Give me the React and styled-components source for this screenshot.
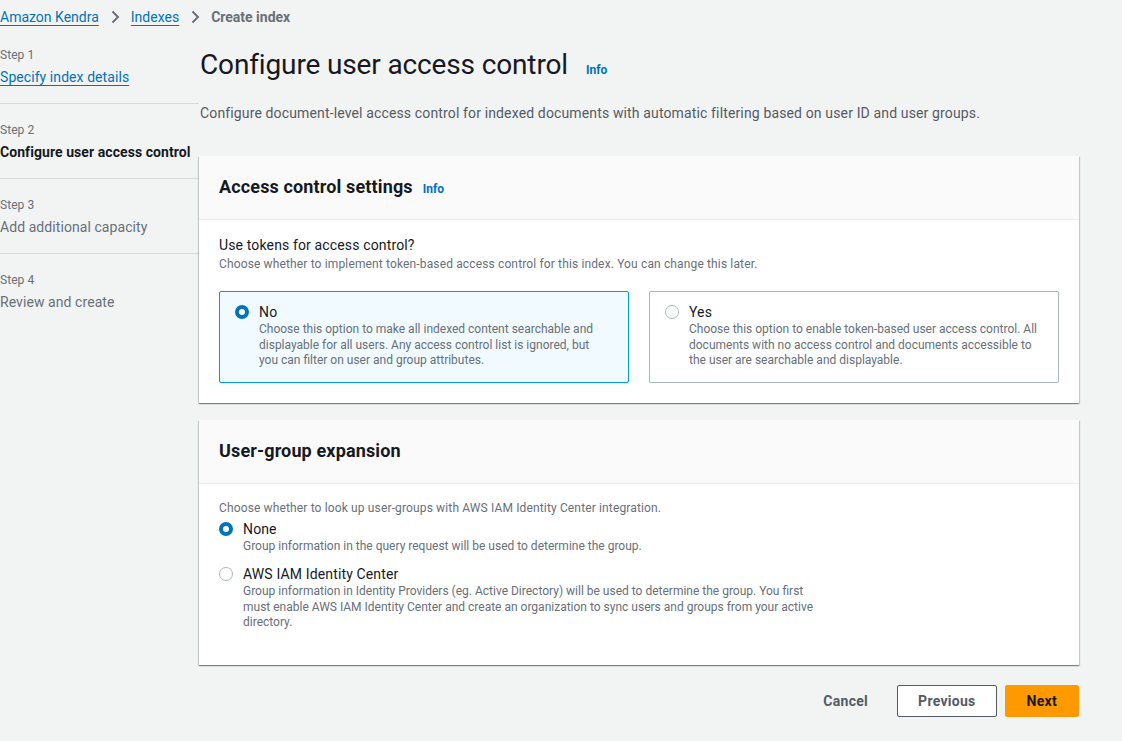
import styled, { createGlobalStyle } from "styled-components";

const GlobalStyle = createGlobalStyle`
  html, body {
    margin: 0;
    padding: 0;
    background: #f2f3f3;
  }
  body {
    font-family: Roboto, "Open Sans", Arial, sans-serif;
    color: #16191f;
    font-size: 14px;
    letter-spacing: 0.01em;
  }
  * { box-sizing: border-box; }
`;

const Page = styled.div`
  width: 1122px;
  min-height: 741px;
  padding-top: 7px;
`;

const Breadcrumbs = styled.nav`
  display: flex;
  align-items: center;
  gap: 11px;
  line-height: 20px;
  height: 20px;
  margin-bottom: 19px;
  letter-spacing: 0;
`;

const Crumb = styled.a`
  color: ${(p) => (p.$current ? "#687078" : "#0073bb")};
  font-weight: ${(p) => (p.$current ? 700 : 400)};
  text-decoration: ${(p) => (p.$current ? "none" : "underline")};
  text-underline-offset: 3px;
`;

const Chevron = () => (
  <svg width="10" height="14" viewBox="0 0 10 14">
    <path d="M2.5 1.5 L8 7 L2.5 12.5" fill="none" stroke="#687078" strokeWidth="2" />
  </svg>
);

const Layout = styled.div`
  display: grid;
  grid-template-columns: 199px 880px;
`;

const StepNav = styled.ul`
  list-style: none;
  margin: 1px 0 0;
  padding: 0;
  letter-spacing: 0.005em;
`;

const StepItem = styled.li`
  padding: ${(p) => (p.$first ? "0" : "18.5px")} 0 15px 0;
  border-bottom: ${(p) => (p.$last ? "none" : "1px solid #d5dbdb")};
`;

const StepLabel = styled.div`
  font-size: 12px;
  line-height: 16px;
  color: #687078;
  margin-bottom: 2.5px;
`;

const StepTitle = styled.div`
  font-size: 14px;
  line-height: 22px;
  white-space: nowrap;
  color: ${(p) => (p.$state === "active" ? "#16191f" : p.$state === "link" ? "#0073bb" : "#687078")};
  font-weight: ${(p) => (p.$state === "active" ? 700 : 400)};
  text-decoration: ${(p) => (p.$state === "link" ? "underline" : "none")};
  text-underline-offset: 3px;
`;

const Main = styled.main`
  display: flex;
  flex-direction: column;
`;

const TitleRow = styled.div`
  display: flex;
  align-items: baseline;
  gap: 18px;
  padding-left: 1px;
  padding-top: 1px;
`;

const PageTitle = styled.h1`
  margin: 0;
  font-size: 28px;
  line-height: 36px;
  font-weight: 400;
  letter-spacing: -0.005em;
`;

const Info = styled.a`
  font-size: 12px;
  font-weight: 700;
  letter-spacing: 0;
  color: #0073bb;
  text-decoration: none;
`;

const PageDesc = styled.p`
  margin: 19px 0 32px 1px;
  font-size: 14px;
  line-height: 22px;
  color: #545b64;
`;

const Container = styled.section`
  background: #fff;
  box-shadow: 0 1px 1px 0 rgba(0, 28, 36, 0.3), 1px 1px 1px 0 rgba(0, 28, 36, 0.15),
    -1px 1px 1px 0 rgba(0, 28, 36, 0.15);
  margin-bottom: ${(p) => p.$gap || 0}px;
`;

const ContainerHeader = styled.header`
  display: flex;
  align-items: baseline;
  gap: 10px;
  padding: 20px 20px 21px;
  background: #fafafa;
  border-bottom: 1px solid #eaeded;
`;

const ContainerTitle = styled.h2`
  margin: 0;
  font-size: 18px;
  line-height: 22px;
  font-weight: 700;
`;

const ContainerBody = styled.div`
  padding: ${(p) => p.$pad || "14px 20px 20px"};
`;

const FieldLabel = styled.div`
  font-size: 14px;
  line-height: 22px;
`;

const FieldDesc = styled.div`
  font-size: 12px;
  line-height: 16px;
  color: #687078;
`;

const Tiles = styled.div`
  display: grid;
  grid-template-columns: 1fr 1fr;
  gap: 20px;
  margin-top: 19px;
`;

const Tile = styled.div`
  display: flex;
  gap: 10px;
  padding: 10px 15px 13px;
  border: 1px solid ${(p) => (p.$checked ? "#00a1c9" : "#aab7b8")};
  border-radius: 2px;
  background: ${(p) => (p.$checked ? "#f1faff" : "#fff")};
`;

const Radio = styled.span`
  flex: none;
  width: 14px;
  height: 14px;
  margin-top: 3px;
  border-radius: 50%;
  background: #fff;
  border: ${(p) => (p.$checked ? "4px solid #0073bb" : "1px solid #aab7b8")};
`;

const OptionText = styled.div`
  display: flex;
  flex-direction: column;
  max-width: ${(p) => (p.$wrap ? `${p.$wrap}px` : "none")};
`;

const OptionLabel = styled.div`
  font-size: 14px;
  line-height: 20px;
`;

const OptionDesc = styled.div`
  font-size: 12px;
  line-height: 15.5px;
  letter-spacing: 0;
  color: #687078;
`;

const RadioGroup = styled.div`
  display: flex;
  flex-direction: column;
  gap: 9.5px;
  margin-top: 3.5px;
`;

const RadioRow = styled.div`
  display: flex;
  gap: 10px;
`;

const Actions = styled.div`
  display: flex;
  justify-content: flex-end;
  gap: 8px;
  margin-top: 20px;
`;

const Button = styled.button`
  font-family: inherit;
  font-size: 14px;
  font-weight: 700;
  letter-spacing: 0.02em;
  line-height: 22px;
  padding: 4px ${(p) => (p.$variant === "primary" ? 21 : 20)}px;
  border-radius: 2px;
  cursor: pointer;
  border: 1px solid
    ${(p) => (p.$variant === "primary" ? "#ff9900" : p.$variant === "link" ? "transparent" : "#545b64")};
  background: ${(p) => (p.$variant === "primary" ? "#ff9900" : p.$variant === "link" ? "transparent" : "#fff")};
  color: ${(p) => (p.$variant === "primary" ? "#16191f" : "#545b64")};
`;

const steps = [
  { label: "Step 1", title: "Specify index details", state: "link" },
  { label: "Step 2", title: "Configure user access control", state: "active" },
  { label: "Step 3", title: "Add additional capacity", state: "" },
  { label: "Step 4", title: "Review and create", state: "" },
];

export default function App() {
  return (
    <Page>
      <GlobalStyle />
      <Breadcrumbs>
        <Crumb href="#">Amazon Kendra</Crumb>
        <Chevron />
        <Crumb href="#">Indexes</Crumb>
        <Chevron />
        <Crumb $current>Create index</Crumb>
      </Breadcrumbs>

      <Layout>
        <StepNav>
          {steps.map((s, i) => (
            <StepItem key={s.label} $first={i === 0} $last={i === steps.length - 1}>
              <StepLabel>{s.label}</StepLabel>
              <StepTitle $state={s.state}>{s.title}</StepTitle>
            </StepItem>
          ))}
        </StepNav>

        <Main>
          <TitleRow>
            <PageTitle>Configure user access control</PageTitle>
            <Info href="#">Info</Info>
          </TitleRow>
          <PageDesc>
            Configure document-level access control for indexed documents with automatic filtering
            based on user ID and user groups.
          </PageDesc>

          <Container $gap={17}>
            <ContainerHeader>
              <ContainerTitle>Access control settings</ContainerTitle>
              <Info href="#">Info</Info>
            </ContainerHeader>
            <ContainerBody>
              <FieldLabel>Use tokens for access control?</FieldLabel>
              <FieldDesc>
                Choose whether to implement token-based access control for this index. You can change
                this later.
              </FieldDesc>
              <Tiles>
                <Tile $checked>
                  <Radio $checked />
                  <OptionText $wrap={350}>
                    <OptionLabel>No</OptionLabel>
                    <OptionDesc>
                      Choose this option to make all indexed content searchable and displayable for
                      all users. Any access control list is ignored, but you can filter on user and
                      group attributes.
                    </OptionDesc>
                  </OptionText>
                </Tile>
                <Tile>
                  <Radio />
                  <OptionText>
                    <OptionLabel>Yes</OptionLabel>
                    <OptionDesc>
                      Choose this option to enable token-based user access control. All documents
                      with no access control and documents accessible to the user are searchable and
                      displayable.
                    </OptionDesc>
                  </OptionText>
                </Tile>
              </Tiles>
            </ContainerBody>
          </Container>

          <Container>
            <ContainerHeader>
              <ContainerTitle>User-group expansion</ContainerTitle>
            </ContainerHeader>
            <ContainerBody $pad="16px 20px 34px">
              <FieldDesc>
                Choose whether to look up user-groups with AWS IAM Identity Center integration.
              </FieldDesc>
              <RadioGroup>
                <RadioRow>
                  <Radio $checked />
                  <OptionText>
                    <OptionLabel>None</OptionLabel>
                    <OptionDesc>
                      Group information in the query request will be used to determine the group.
                    </OptionDesc>
                  </OptionText>
                </RadioRow>
                <RadioRow>
                  <Radio />
                  <OptionText $wrap={590}>
                    <OptionLabel>AWS IAM Identity Center</OptionLabel>
                    <OptionDesc>
                      Group information in Identity Providers (eg. Active Directory) will be used to
                      determine the group. You first must enable AWS IAM Identity Center and create an
                      organization to sync users and groups from your active directory.
                    </OptionDesc>
                  </OptionText>
                </RadioRow>
              </RadioGroup>
            </ContainerBody>
          </Container>

          <Actions>
            <Button $variant="link">Cancel</Button>
            <Button>Previous</Button>
            <Button $variant="primary">Next</Button>
          </Actions>
        </Main>
      </Layout>
    </Page>
  );
}
